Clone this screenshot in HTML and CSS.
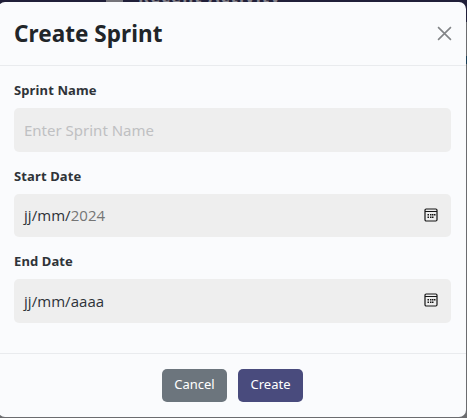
FILE: index.html
```html
<!DOCTYPE html>
<html lang="en">
<head>
<meta charset="utf-8">
<title>Create Sprint</title>
<link rel="stylesheet" href="styles.css">
</head>
<body>
<div class="backdrop"><span class="thumb"></span><span class="page-title">Recent Activity</span></div>
<span class="edge"></span>
<form class="modal">
  <header class="modal-header">
    <h1>Create Sprint</h1>
    <svg class="close" viewBox="0 0 14 14"><path d="M1 1L13 13M13 1L1 13"/></svg>
  </header>
  <div class="modal-body">
    <div class="label">Sprint Name</div>
    <div class="field name"><span class="placeholder">Enter Sprint Name</span></div>
    <div class="label">Start Date</div>
    <div class="field start"><span class="date">jj/mm/<span class="muted">2024</span></span>
      <svg class="calendar" viewBox="0 0 14 14"><rect class="frame" x="1" y="1" width="12" height="12" rx="1.2"/><path class="bar" d="M1 3.500H13"/><path class="dots" d="M6 6h1.500v1.500H6zM8 6h1.500v1.500H8zM10 6h1.500v1.500H10zM3.500 6H5v1.500H3.500zM3.500 8.500H5V10H3.500zM6 8.500h1.500V10H6zM8 8.500h1.500V10H8z"/></svg>
    </div>
    <div class="label">End Date</div>
    <div class="field end"><span class="date">jj/mm/aaaa</span>
      <svg class="calendar" viewBox="0 0 14 14"><rect class="frame" x="1" y="1" width="12" height="12" rx="1.2"/><path class="bar" d="M1 3.500H13"/><path class="dots" d="M6 6h1.500v1.500H6zM8 6h1.500v1.500H8zM10 6h1.500v1.500H10zM3.500 6H5v1.500H3.500zM3.500 8.500H5V10H3.500zM6 8.500h1.500V10H6zM8 8.500h1.500V10H8z"/></svg>
    </div>
  </div>
  <footer class="modal-footer">
    <button type="button" class="btn cancel">Cancel</button>
    <button type="button" class="btn create">Create</button>
  </footer>
</form>
</body>
</html>
```
FILE: styles.css
```css
* { box-sizing: border-box; }
body {
  margin: 0;
  height: 418px;
  overflow: hidden;
  position: relative;
  background: linear-gradient(#201f39 22px, #6b6c6f 22px);
  font-family: "Noto Sans", "Open Sans", sans-serif;
}
.backdrop {
  position: absolute;
  top: 0;
  left: 106px;
  height: 2px;
  width: 240px;
  overflow: hidden;
}
.thumb { position: absolute; width: 17px; height: 2px; background: #75747a; }
.page-title {
  position: absolute;
  left: 32px;
  top: -13px;
  font-size: 17px;
  line-height: 20px;
  font-weight: 700;
  letter-spacing: 1px;
  color: #85828a;
  white-space: nowrap;
}
.edge { position: absolute; right: 0; top: 56px; width: 1px; height: 8px; background: #183d55; }
.modal {
  position: relative;
  width: 468px;
  height: 415px;
  margin: 0 0 0 -2px;
  top: 2px;
  border-radius: 7px;
  background: #fafbfd;
  display: flex;
  flex-direction: column;
}
.modal-header {
  height: 64px;
  flex: none;
  border-bottom: 1px solid #e9ebee;
  padding: 0 14px 0 16px;
  display: flex;
  align-items: center;
  justify-content: space-between;
}
h1 {
  margin: 0;
  font-size: 22.5px;
  line-height: 30px;
  font-weight: 700;
  letter-spacing: .05px;
  color: #212529;
}
.close { width: 15px; height: 15px; fill: none; stroke: #828487; stroke-width: 1.5; }
.modal-body { flex: 1; padding: 15px 15px 0 16px; }
.label {
  height: 19px;
  line-height: 19px;
  font-size: 13px;
  font-weight: 700;
  letter-spacing: .12px;
  color: #2f3338;
}
.field {
  margin: 8px 0 15px;
  padding: 0 13px 0 10px;
  border-radius: 5px;
  background: #eee;
  font-size: 15px;
  display: flex;
  align-items: center;
  justify-content: space-between;
}
.name, .end { height: 44px; }
.start { height: 43px; }
.placeholder { color: #bfc0c2; }
.date { color: #2d3238; font-family: "Open Sans", sans-serif; font-weight: 400; letter-spacing: .05px; }
.start .date, .start .calendar, .end .calendar { margin-bottom: 2px; }
.muted { color: #757575; }
.calendar { width: 14px; height: 14px; flex: none; }
.frame { fill: none; stroke: #151515; stroke-width: 1.2; }
.bar { stroke: #151515; stroke-width: 1; }
.dots { fill: #151515; }
.modal-footer {
  flex: none;
  height: 64px;
  border-top: 1px solid #e9ebee;
  display: flex;
  justify-content: center;
  align-items: center;
  gap: 11px;
  padding-left: 1px;
}
.btn {
  width: 65px;
  height: 33px;
  padding: 0 0 2px;
  border: 0;
  border-radius: 5px;
  font: 400 13px/19px "Noto Sans", sans-serif;
  color: #fff;
}
.cancel { background: #6c757d; }
.create { background: #494b7d; }
```
